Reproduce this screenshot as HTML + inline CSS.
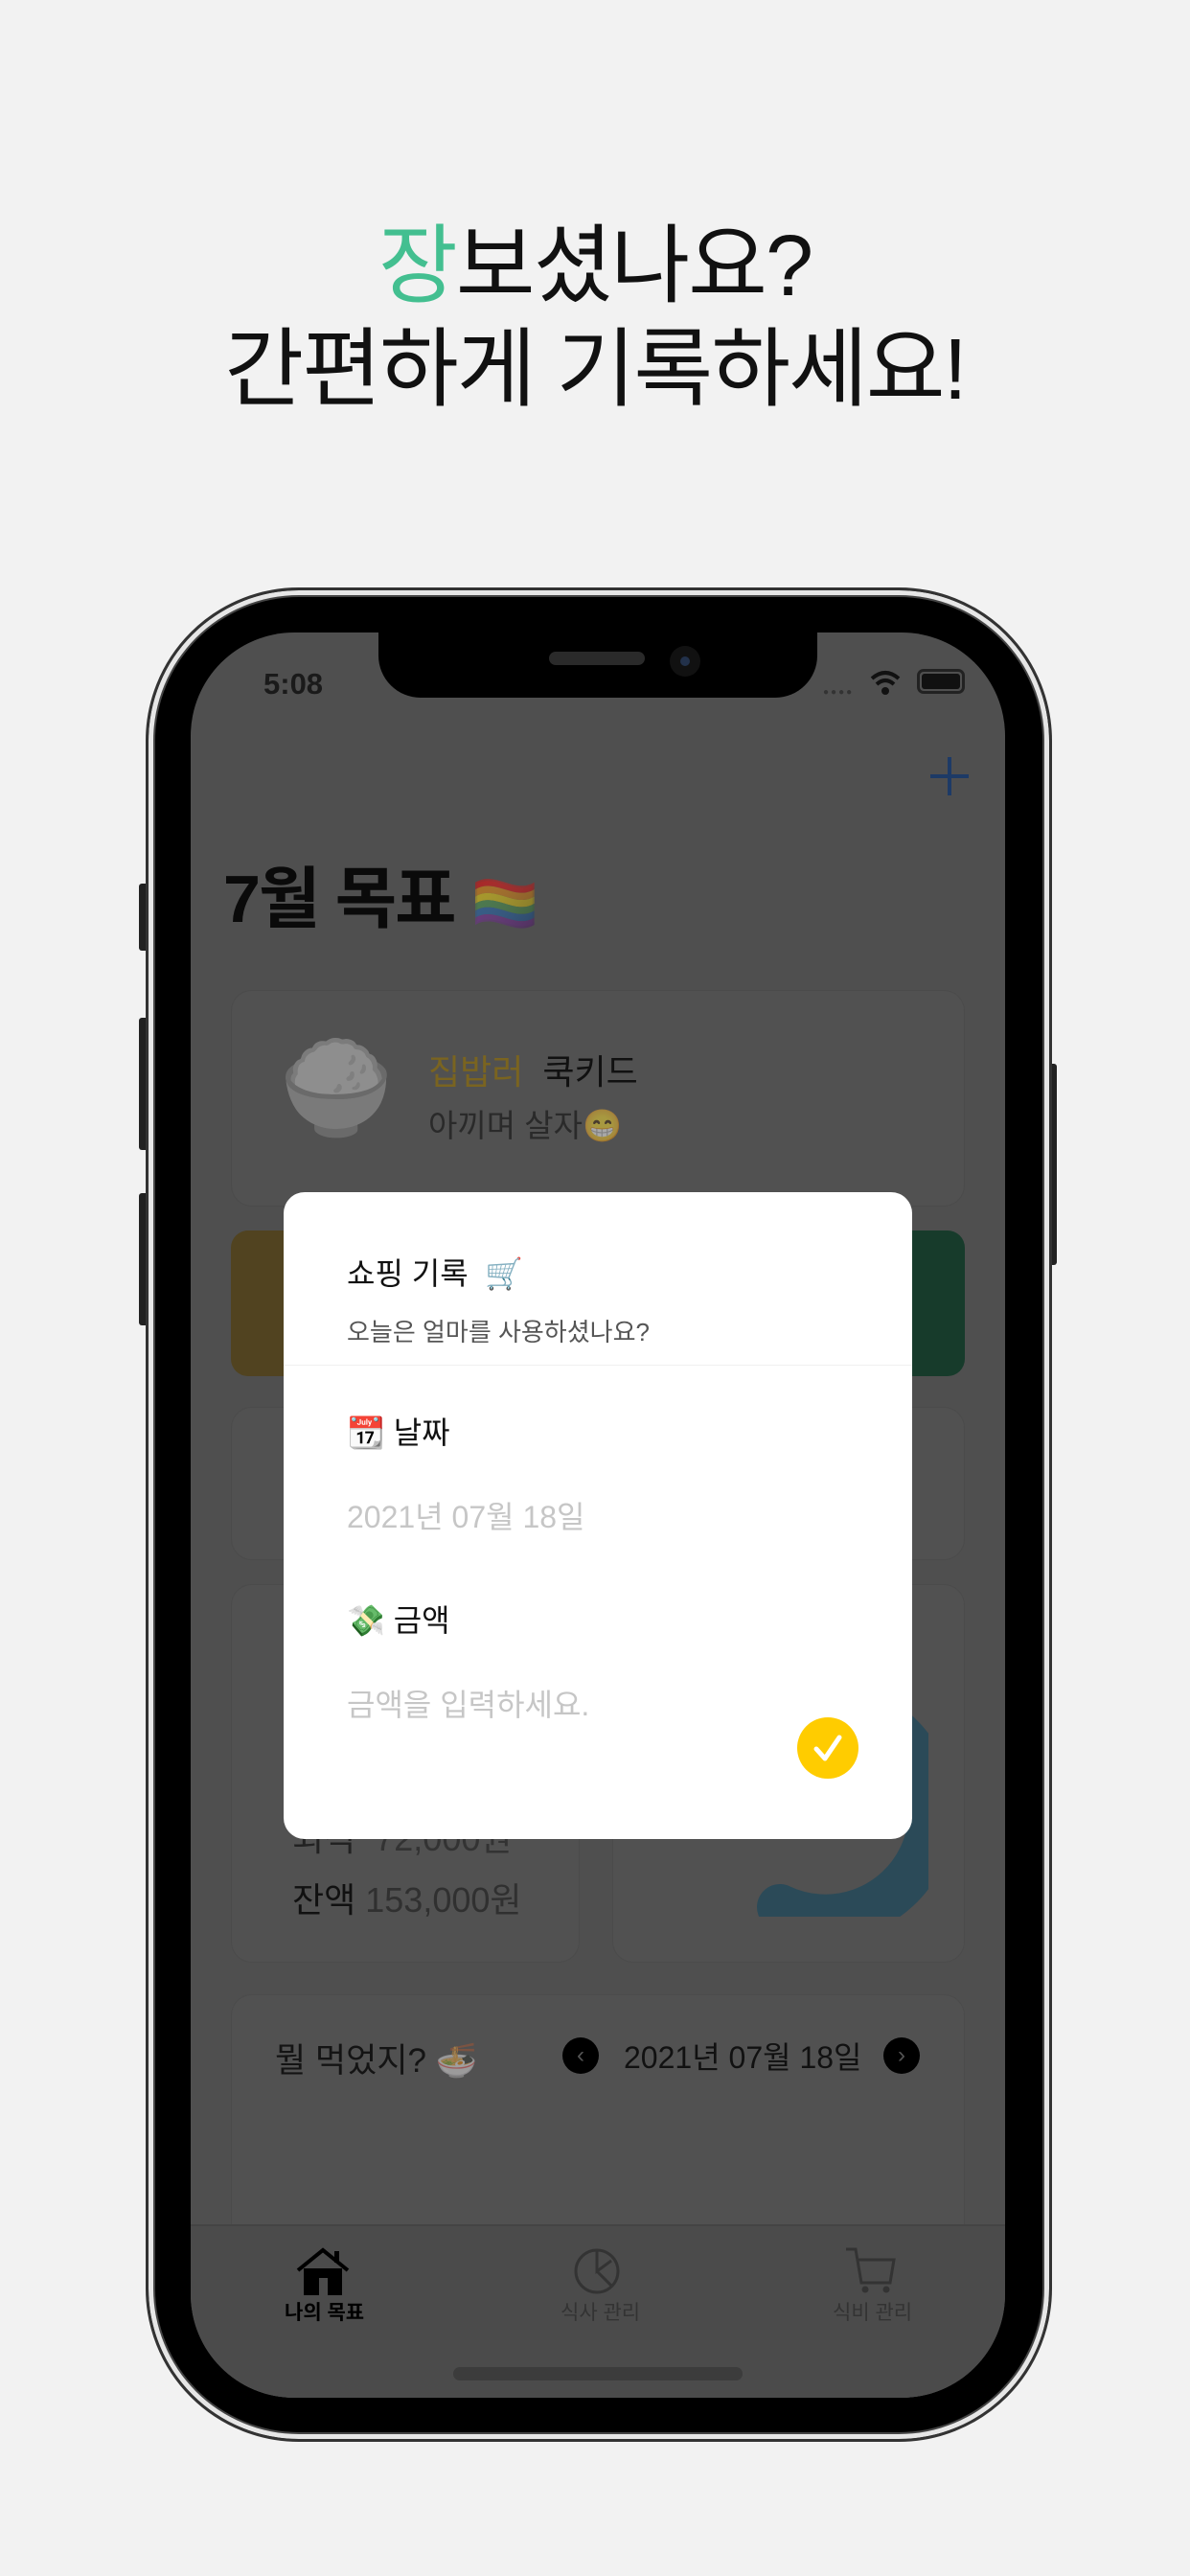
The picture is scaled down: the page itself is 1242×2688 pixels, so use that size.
<!DOCTYPE html>
<html><head><meta charset="utf-8"><style>
*{margin:0;padding:0;box-sizing:border-box}
body{width:1242px;height:2688px;background:#f2f2f2;position:relative;overflow:hidden;font-family:"Liberation Sans","Noto Sans CJK KR",sans-serif}
.a{position:absolute;white-space:nowrap}
.h{left:0;width:1242px;text-align:center;font-size:90px;color:#111;line-height:100px;letter-spacing:-2px}
</style></head><body>
<div class="a h" style="top:228px"><span style="color:#43bf90">장</span>보셨나요?</div>
<div class="a h" style="top:336px">간편하게 기록하세요!</div>

<!-- side buttons -->
<div class="a" style="left:145px;top:922px;width:10px;height:70px;background:#222;border-radius:3px"></div>
<div class="a" style="left:145px;top:1062px;width:10px;height:138px;background:#222;border-radius:3px"></div>
<div class="a" style="left:145px;top:1245px;width:10px;height:138px;background:#222;border-radius:3px"></div>
<div class="a" style="left:1093px;top:1110px;width:10px;height:210px;background:#222;border-radius:3px"></div>

<!-- phone frame -->
<div class="a" style="left:152px;top:613px;width:946px;height:1935px;border-radius:160px;background:#000;border:3px solid #333;box-shadow:inset 0 0 0 5px #e6e6e6,inset 0 0 0 7px #444"></div>
<div class="a" style="left:199px;top:660px;width:850px;height:1842px;border-radius:108px;background:#4f4f4f;overflow:hidden">
  <!-- notch -->
  <div class="a" style="left:196px;top:0;width:458px;height:68px;background:#000;border-radius:0 0 44px 44px"></div>
  <div class="a" style="left:374px;top:20px;width:100px;height:14px;border-radius:7px;background:#2a2a2a"></div>
  <div class="a" style="left:500px;top:14px;width:32px;height:32px;border-radius:50%;background:#111"><div style="margin:11px;width:10px;height:10px;border-radius:50%;background:#22314a"></div></div>
  <div class="a" style="left:76px;top:36px;font-size:31px;font-weight:bold;color:#1a1a1a">5:08</div>
  <div class="a" style="left:660px;top:57px;font-size:10px;color:#333;letter-spacing:2px">●●●●</div>
  <svg class="a" style="left:708px;top:38px" width="34" height="30" viewBox="0 0 34 30"><path d="M3 10 Q17 -2 31 10" stroke="#111" stroke-width="4" fill="none"/><path d="M8 16 Q17 8 26 16" stroke="#111" stroke-width="4" fill="none"/><circle cx="17" cy="23" r="4" fill="#111"/></svg>
  <div class="a" style="left:758px;top:38px;width:50px;height:26px;border:3px solid #222;border-radius:7px;padding:2px"><div style="width:100%;height:100%;background:#111;border-radius:3px"></div></div>
  <!-- plus -->
  <div class="a" style="left:790px;top:130px;width:4px;height:40px;background:#1d3a66"></div>
  <div class="a" style="left:772px;top:148px;width:40px;height:4px;background:#1d3a66"></div>
  <div class="a" style="left:34px;top:222px;font-size:70px;font-weight:bold;color:#0a0a0a;letter-spacing:-2px">7월 목표 <span style="font-size:56px;opacity:.5">🏳️‍🌈</span></div>
  <!-- card1 -->
  <div class="a" style="left:42px;top:373px;width:766px;height:226px;border-radius:22px;background:#515151;border:1px solid #4b4b4b"></div>
  <div class="a" style="left:92px;top:420px;font-size:96px;opacity:.35;filter:grayscale(1)">🍚</div>
  <div class="a" style="left:248px;top:430px;font-size:36px;color:#7a6420">집밥러 <span style="color:#111">&nbsp;쿡키드</span></div>
  <div class="a" style="left:248px;top:488px;font-size:33px;color:#2a2a2a">아끼며 살자<span style="opacity:.5">😁</span></div>
  <!-- colored cards -->
  <div class="a" style="left:42px;top:624px;width:320px;height:152px;border-radius:18px;background:#514320"></div>
  <div class="a" style="left:500px;top:624px;width:308px;height:152px;border-radius:18px;background:#173b2b"></div>
  <div class="a" style="left:42px;top:808px;width:766px;height:160px;border-radius:22px;background:#515151;border:1px solid #4b4b4b"></div>
  <div class="a" style="left:42px;top:993px;width:364px;height:395px;border-radius:22px;background:#515151;border:1px solid #4b4b4b"></div>
  <div class="a" style="left:440px;top:993px;width:368px;height:395px;border-radius:22px;background:#515151;border:1px solid #4b4b4b"></div>
  <div class="a" style="left:98px;top:1110px;width:12px;height:48px;background:#6a1a1a"></div>
  <svg class="a" style="left:470px;top:1000px" width="300" height="340"><path d="M240 130 A110 110 0 0 1 145 330" stroke="#2b4a58" stroke-width="48" fill="none" stroke-linecap="round"/></svg>
  <div class="a" style="left:106px;top:1230px;font-size:36px;color:#222">외식 <span style="color:#333">&nbsp;72,000원</span></div>
  <div class="a" style="left:106px;top:1294px;font-size:36px;color:#111">잔액 <span style="color:#303030">153,000원</span></div>
  <!-- meal card -->
  <div class="a" style="left:42px;top:1421px;width:766px;height:460px;border-radius:22px;background:#515151;border:1px solid #4b4b4b"></div>
  <div class="a" style="left:88px;top:1462px;font-size:35px;color:#141414">뭘 먹었지? <span style="opacity:.45">🍜</span></div>
  <div class="a" style="left:388px;top:1466px;width:38px;height:38px;border-radius:50%;background:#000;color:#555;font-size:24px;text-align:center;line-height:38px">‹</div>
  <div class="a" style="left:452px;top:1462px;font-size:32px;color:#111">2021년 07월 18일</div>
  <div class="a" style="left:723px;top:1466px;width:38px;height:38px;border-radius:50%;background:#000;color:#555;font-size:24px;text-align:center;line-height:38px">›</div>
  <!-- tab bar -->
  <div class="a" style="left:0;top:1661px;width:850px;height:200px;background:#4b4b4b;border-top:2px solid #444"></div>
  <svg class="a" style="left:110px;top:1685px" width="56" height="50" viewBox="0 0 56 50"><path d="M2 24 L28 3 L54 24" stroke="#000" stroke-width="4" fill="none"/><rect x="8" y="22" width="40" height="28" fill="#000"/><rect x="24" y="32" width="9" height="18" fill="#4b4b4b"/><rect x="40" y="4" width="5" height="12" fill="#000"/></svg>
  <div class="a" style="left:98px;top:1737px;font-size:21px;font-weight:bold;color:#000">나의 목표</div>
  <svg class="a" style="left:399px;top:1685px" width="50" height="50"><circle cx="25" cy="25" r="22" stroke="#333" stroke-width="3" fill="none"/><path d="M25 3 V25 L40 14 M25 25 L40 40" stroke="#333" stroke-width="3" fill="none"/></svg>
  <div class="a" style="left:386px;top:1737px;font-size:21px;color:#333">식사 관리</div>
  <svg class="a" style="left:682px;top:1684px" width="56" height="50"><path d="M2 3 H12 L18 38 H48 L52 14 H14" stroke="#333" stroke-width="3" fill="none"/><circle cx="22" cy="45" r="3.5" fill="#333"/><circle cx="44" cy="45" r="3.5" fill="#333"/></svg>
  <div class="a" style="left:670px;top:1737px;font-size:21px;color:#333">식비 관리</div>
  <div class="a" style="left:274px;top:1810px;width:302px;height:14px;border-radius:7px;background:#3c3c3c"></div>
  <!-- dialog -->
  <div class="a" style="left:97px;top:584px;width:656px;height:675px;border-radius:22px;background:#fff;overflow:hidden">
    <div class="a" style="left:66px;top:60px;font-size:32px;color:#111">쇼핑 기록 &nbsp;🛒</div>
    <div class="a" style="left:66px;top:126px;font-size:26px;color:#555">오늘은 얼마를 사용하셨나요?</div>
    <div class="a" style="left:0;top:180px;width:656px;height:1px;background:#f0f0f0"></div>
    <div class="a" style="left:66px;top:226px;font-size:32px;color:#111">📆 날짜</div>
    <div class="a" style="left:66px;top:314px;font-size:32px;color:#c6c6c6">2021년 07월 18일</div>
    <div class="a" style="left:66px;top:422px;font-size:32px;color:#111">💸 금액</div>
    <div class="a" style="left:66px;top:510px;font-size:32px;color:#c6c6c6">금액을 입력하세요.</div>
    <div class="a" style="left:536px;top:548px;width:64px;height:64px;border-radius:50%;background:#ffcc00"><svg width="64" height="64"><path d="M20 33 L29 43 L44 21" stroke="#fff" stroke-width="5" fill="none" stroke-linecap="round" stroke-linejoin="round"/></svg></div>
  </div>
</div>
</body></html>
